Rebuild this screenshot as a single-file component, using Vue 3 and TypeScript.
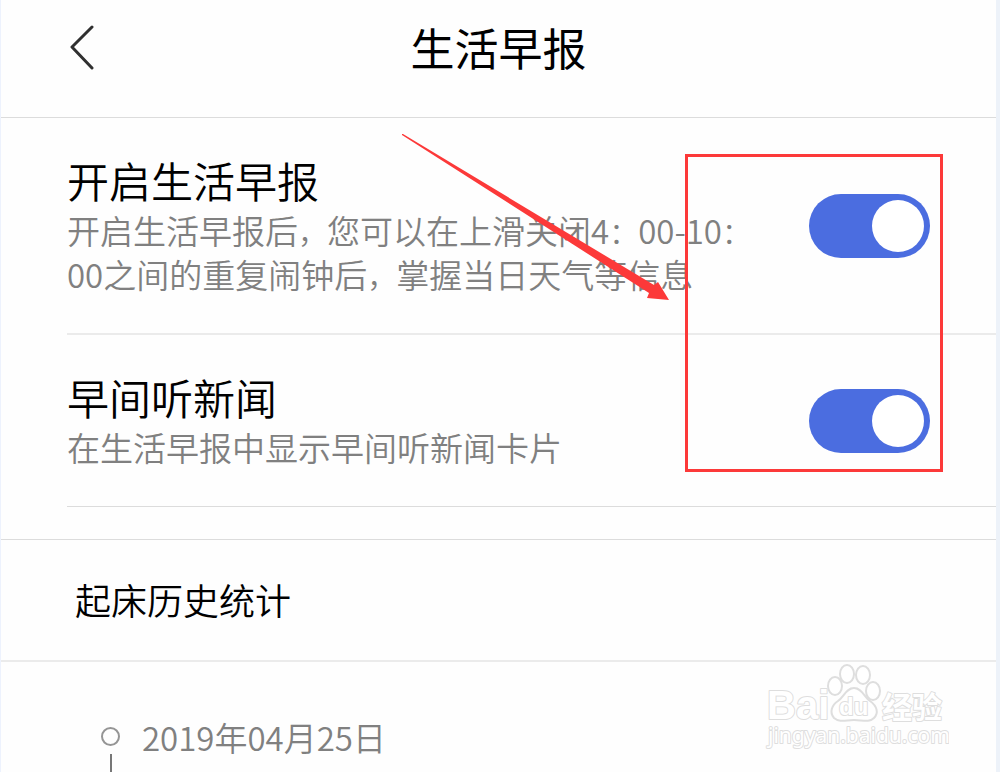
<script setup lang="ts">
import { ref } from 'vue'

interface Piece {
  text: string
  mark: boolean
}

interface Setting {
  id: string
  title: string
  description: string
  enabled: boolean
}

const settings = ref<Setting[]>([
  {
    id: 'morning-report',
    title: '开启生活早报',
    description: '开启生活早报后，您可以在上滑关闭4：00-10：00之间的重复闹钟后，掌握当日天气等信息',
    enabled: true,
  },
  {
    id: 'morning-news',
    title: '早间听新闻',
    description: '在生活早报中显示早间听新闻卡片',
    enabled: true,
  },
])

const history: string[] = ['2019年04月25日']

// Full-width punctuation is set smaller than the characters around it.
function pieces(text: string): Piece[] {
  return text
    .split(/([，：])/)
    .filter((part) => part.length > 0)
    .map((part) => ({ text: part, mark: part === '，' || part === '：' }))
}
</script>

<template>
  <div class="page">
    <header class="header">
      <button class="back" type="button" aria-label="返回">
        <svg width="28" height="46" viewBox="0 0 28 46" aria-hidden="true">
          <path d="M25 3 L5 23 L25 44" />
        </svg>
      </button>
      <h1 class="header-title">生活早报</h1>
    </header>

    <main class="content">
      <section class="settings">
        <div v-for="item in settings" :key="item.id" class="row">
          <div class="row-text">
            <label class="row-title" :for="item.id">{{ item.title }}</label>
            <p :id="item.id + '-text'" class="row-description"><span
              v-for="(piece, index) in pieces(item.description)"
              :key="index"
              :class="{ mark: piece.mark }"
            >{{ piece.text }}</span></p>
          </div>
          <input
            :id="item.id"
            v-model="item.enabled"
            class="switch"
            type="checkbox"
            role="switch"
            :aria-describedby="item.id + '-text'"
          />
        </div>
        <div class="highlight"></div>
        <svg class="arrow" width="270" height="168" viewBox="0 0 270 168" aria-hidden="true">
          <path d="M0 0 L1 0 L252 151 L256 148 L267 166 L245 164 L247 159 L0 1 Z" />
        </svg>
      </section>

      <h2 class="section-title">起床历史统计</h2>

      <ol class="timeline">
        <li v-for="date in history" :key="date" class="entry">
          <span class="rail"><span class="dot"></span><span class="stem"></span></span>
          <time class="date">{{ date }}</time>
        </li>
      </ol>
    </main>

    <svg class="watermark" width="184" height="92" viewBox="0 0 184 92" role="img" aria-label="Baidu 经验">
      <text class="brand" x="2" y="55">Bai</text>
      <g class="paw">
        <ellipse cx="70" cy="22" rx="7" ry="9" />
        <ellipse cx="82" cy="10" rx="7" ry="9" />
        <ellipse cx="98" cy="11" rx="7" ry="9" />
        <ellipse cx="108" cy="27" rx="7" ry="9" />
        <path d="M89 24 C97 24 99 33 105 37 C112 42 114 49 109 54 C104 59 97 56 89 56 C81 56 75 59 69 54 C64 48 67 41 73 37 C79 33 81 24 89 24 Z" />
      </g>
      <text class="inner" x="74" y="51">du</text>
      <text class="label" x="117" y="54">经验</text>
      <text class="site" x="3" y="79">jingyan.baidu.com</text>
    </svg>
  </div>
</template>

<style>
body {
  margin: 0;
}
</style>

<style scoped>
.page {
  position: relative;
  box-sizing: border-box;
  min-height: 100vh;
  display: flex;
  flex-direction: column;
  overflow: hidden;
  border-left: 1px solid #edf2fd;
  border-right: 4px solid #edf2f9;
  background: #fefefe;
  color: #000;
  font-family: "Noto Sans CJK SC", sans-serif;
  font-weight: 350;
}

.header {
  display: grid;
  grid-template-columns: 1fr auto 1fr;
  align-items: center;
  padding: 15px 66px 38px;
  border-bottom: 1px solid #dcdcdc;
}

.back {
  justify-self: start;
  display: flex;
  padding: 0;
  border: 0;
  background: none;
  cursor: pointer;
}

.back path {
  fill: none;
  stroke: #303030;
  stroke-width: 3;
  stroke-linecap: round;
  stroke-linejoin: round;
}

.header-title {
  margin: 0;
  font-size: 44px;
  line-height: 64px;
  font-weight: 400;
}

.content {
  flex: 1;
  display: flex;
  flex-direction: column;
}

.settings {
  position: relative;
  padding-bottom: 32px;
  border-bottom: 1px solid #dcdcdc;
}

.row {
  display: flex;
  align-items: center;
  gap: 40px;
  margin-left: 66px;
  padding: 34px 66px 33px 0;
  border-bottom: 1px solid #dcdcdc;
}

.row:first-child {
  border-bottom: 2px solid #ebebeb;
}

.row-text {
  flex: 1;
  min-width: 0;
  padding-bottom: 4px;
}

.row-title {
  display: block;
  font-size: 42px;
  line-height: 56px;
}

.row-description {
  margin: 0;
  color: #808080;
  font-size: 33px;
  line-height: 44px;
}

.mark {
  font-size: 29px;
  line-height: 1;
}

.switch {
  appearance: none;
  flex: none;
  display: flex;
  align-items: center;
  box-sizing: border-box;
  width: 121px;
  height: 64px;
  margin: 0;
  padding: 6px;
  border-radius: 32px;
  background: #c8c8c8;
  cursor: pointer;
}

.switch::before {
  content: "";
  width: 52px;
  height: 52px;
  border-radius: 50%;
  background: #fff;
}

.switch:checked {
  justify-content: flex-end;
  background: #4b6de0;
}

.highlight {
  position: absolute;
  top: 36px;
  right: 53px;
  box-sizing: border-box;
  width: 258px;
  height: 318px;
  border: 3px solid #fc3939;
  pointer-events: none;
}

.arrow {
  position: absolute;
  top: 16px;
  right: 324px;
  fill: #fc3939;
  pointer-events: none;
}

.section-title {
  margin: 0;
  padding: 34px 74px 36px;
  border-bottom: 2px solid #ebebeb;
  font-size: 36px;
  line-height: 50px;
  font-weight: 350;
}

.timeline {
  flex: 1;
  display: flex;
  flex-direction: column;
  margin: 0;
  padding: 53px 66px 0 100px;
  list-style: none;
}

.entry {
  flex: 1;
  display: flex;
  gap: 22px;
}

.rail {
  display: flex;
  flex-direction: column;
  align-items: center;
  gap: 8px;
  padding-top: 12px;
}

.dot {
  box-sizing: border-box;
  width: 19px;
  height: 19px;
  border: 2px solid #959595;
  border-radius: 50%;
}

.stem {
  flex: 1;
  width: 2px;
  background: #777;
}

.date {
  color: #808080;
  font-size: 33px;
  line-height: 44px;
}

.watermark {
  position: absolute;
  right: 47px;
  bottom: 16px;
  fill: #fff;
  stroke: #dedede;
  stroke-width: 2;
  stroke-linejoin: round;
  pointer-events: none;
}

.watermark text {
  paint-order: stroke;
}

.brand {
  font: 700 40px "Liberation Sans", sans-serif;
}

.inner {
  font: 700 24px "Liberation Sans", sans-serif;
}

.label {
  font: 700 30px "Noto Sans CJK SC", sans-serif;
}

.site {
  font: 400 21px "Noto Sans", sans-serif;
}
</style>
